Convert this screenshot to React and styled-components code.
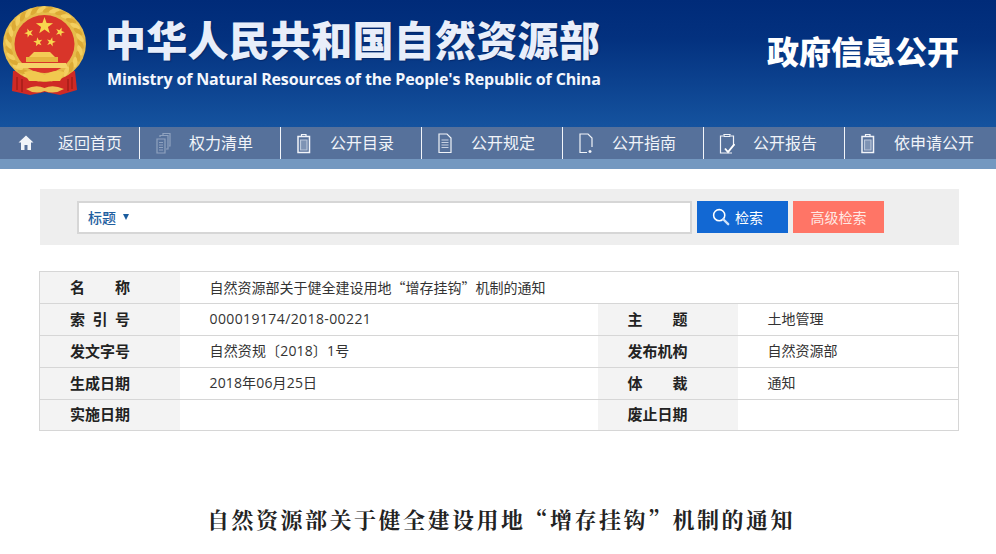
import styled, { createGlobalStyle } from 'styled-components';

const GlobalStyle = createGlobalStyle`
  html, body {
    margin: 0;
    padding: 0;
    background: #fff;
    overflow: hidden;
  }
  body {
    font-family: "Open Sans", "Noto Sans CJK SC", sans-serif;
    color: #333;
  }
`;

const Page = styled.div`
  width: 996px;
  height: 554px;
  overflow: hidden;
`;

const Header = styled.header`
  height: 127px;
  display: flex;
  align-items: flex-start;
  background: linear-gradient(180deg, #002b79 0%, #03317f 30%, #15539f 100%);
`;

const Emblem = styled.svg`
  flex: none;
  width: 90px;
  height: 96px;
  margin: 3px 0 0 0;
`;

const Brand = styled.div`
  margin: 12px 0 0 15px;
  width: 500px;
`;

const BrandName = styled.h1`
  margin: 0;
  height: 52px;
  font-family: "Noto Sans CJK SC", sans-serif;
  font-size: 41px;
  line-height: 52px;
  font-weight: 900;
  white-space: nowrap;
  letter-spacing: 0.25px;
  color: #e8eefa;
  text-shadow: 1px 1px 1px rgba(0, 20, 70, 0.45);
`;

const BrandEnglish = styled.div`
  margin: 4px 0 0 2px;
  font-family: "Open Sans", sans-serif;
  font-size: 16px;
  line-height: 22px;
  font-weight: 700;
  color: #f4f7fd;
  white-space: nowrap;
  letter-spacing: -0.15px;
`;

const Section = styled.div`
  margin: 27px 0 0 162px;
  font-family: "Noto Sans CJK SC", sans-serif;
  font-size: 32px;
  line-height: 46px;
  font-weight: 900;
  color: #fff;
  white-space: nowrap;
`;

const Nav = styled.nav`
  height: 32px;
  display: flex;
  background: #56719b;
  border-bottom: 10px solid #7498c0;
`;

const NavItem = styled.a`
  flex: none;
  box-sizing: border-box;
  width: ${(p) => (p.$first ? 140 : 141)}px;
  height: 32px;
  padding-left: 15px;
  display: flex;
  align-items: center;
  border-right: 1px solid ${(p) => (p.$last ? 'transparent' : '#f2f5fa')};
  font-family: "Noto Sans CJK SC", sans-serif;
  font-size: 16px;
  color: #f1f4f9;
  white-space: nowrap;
`;

const NavText = styled.span`
  position: relative;
  top: -1px;
`;

const NavIcon = styled.svg`
  flex: none;
  width: 16px;
  height: 22px;
  margin-left: ${(p) => (p.$first ? 3 : 0)}px;
  margin-right: ${(p) => (p.$first ? 24 : 18)}px;
  fill: none;
  stroke: #f1f4f9;
  stroke-width: 1.2;
`;

const SearchPanel = styled.div`
  box-sizing: border-box;
  width: 919px;
  height: 56px;
  margin: 20px 0 0 40px;
  padding: 12px 0 0 37px;
  display: flex;
  align-items: flex-start;
  background: #eeeeee;
`;

const SearchInput = styled.div`
  box-sizing: border-box;
  width: 615px;
  height: 33px;
  padding: 0 0 2px 9px;
  display: flex;
  align-items: center;
  gap: 6px;
  background: #fff;
  border: 2px solid #d6d6d6;
  font-family: "Noto Sans CJK SC", sans-serif;
  font-size: 14px;
  font-weight: 500;
  color: #1f5f9f;
`;

const Caret = styled.span`
  width: 0;
  height: 0;
  margin-left: 1px;
  border-left: 3px solid transparent;
  border-right: 3px solid transparent;
  border-top: 6px solid #1a5c9e;
`;

const SearchButton = styled.button`
  box-sizing: border-box;
  width: 91px;
  height: 32px;
  margin-left: 5px;
  padding: ${(p) => (p.$alt ? '0 0 1px' : '0 10px 1px 0')};
  display: flex;
  align-items: center;
  justify-content: center;
  gap: 5px;
  border: 0;
  background: ${(p) => (p.$alt ? '#ff7566' : '#1268d3')};
  color: ${(p) => (p.$alt ? '#ffe9e4' : '#fff')};
  font-family: "Noto Sans CJK SC", sans-serif;
  font-size: 14px;
`;

const InfoTable = styled.table`
  width: 919px;
  margin: 26px 0 0 39px;
  table-layout: fixed;
  border-collapse: collapse;
  border: 1px solid #d6d6d6;
`;

const Row = styled.tr`
  height: ${(p) => (p.$last ? 31 : 32)}px;
  border-top: 1px solid #d6d6d6;
`;

const Label = styled.th`
  padding: 0 0 2px 30px;
  background: #f3f3f3;
  text-align: left;
  font-family: "Noto Sans CJK SC", sans-serif;
  font-size: 15px;
  line-height: 20px;
  font-weight: 700;
  color: #222;
`;

const LabelText = styled.span`
  display: block;
  width: 60px;
  text-align: justify;
  text-align-last: justify;
`;

const Value = styled.td`
  padding: 0 0 2px 30px;
  font-family: ${(p) => (p.$cjk ? '"Noto Sans CJK SC", sans-serif' : 'inherit')};
  font-size: 14px;
  line-height: 20px;
  letter-spacing: ${(p) => p.$tracking || 0}px;
  color: #333;
  white-space: nowrap;
`;

const ArticleTitle = styled.h2`
  margin: 71px 0 0;
  padding-left: 6px;
  text-align: center;
  font-family: "Noto Serif CJK SC", "Noto Sans CJK SC", serif;
  font-size: 22px;
  line-height: 34px;
  font-weight: 700;
  letter-spacing: 2.5px;
  color: #222;
`;

function Star({ x, y, r, rotate = 0 }) {
  const pts = [];
  for (let i = 0; i < 10; i++) {
    const rad = i % 2 === 0 ? r : r * 0.4;
    const a = (Math.PI / 5) * i - Math.PI / 2;
    pts.push(`${(rad * Math.cos(a)).toFixed(2)},${(rad * Math.sin(a)).toFixed(2)}`);
  }
  return <polygon points={pts.join(' ')} fill="#f8d64e" transform={`translate(${x} ${y}) rotate(${rotate})`} />;
}

function NationalEmblem() {
  const leaves = [];
  for (let i = 0; i < 34; i++) {
    const a = (i / 34) * Math.PI * 2;
    leaves.push(
      <ellipse
        key={i}
        cx={44.5 + 36 * Math.cos(a)}
        cy={41 + 34.5 * Math.sin(a)}
        rx="5.4"
        ry="2.2"
        fill={i % 2 ? '#f3cf5f' : '#dcaa35'}
        transform={`rotate(${(a * 180) / Math.PI + 60} ${44.5 + 36 * Math.cos(a)} ${41 + 34.5 * Math.sin(a)})`}
      />
    );
  }
  return (
    <Emblem viewBox="0 0 90 96">
      <path d="M13 68 L12 88 L30 92 L45 89 L60 92 L77 87 L75 68 Z" fill="#cf2a25" />
      <path d="M17 74v13M22 76v13M68 76v12M72 74v12" stroke="#8f1712" strokeWidth="1" />
      <ellipse cx="44.5" cy="41" rx="41.5" ry="38" fill="#e6bb4a" />
      {leaves}
      <ellipse cx="44.5" cy="41" rx="30" ry="29" fill="#d9352a" />
      <Star x={44.5} y={23} r={9} />
      <Star x={29} y={30} r={4.8} rotate={-20} />
      <Star x={60} y={29} r={4.8} rotate={20} />
      <Star x={38} y={39} r={4.8} rotate={-10} />
      <Star x={51} y={39} r={4.8} rotate={15} />
      <path d="M29 54 L34 49 H50 L55 54 Z" fill="#f4cc55" />
      <rect x="26" y="54" width="32" height="5" fill="#e6b63f" />
      <path d="M18 60 H66 L68 65 H16 Z" fill="#f5d468" />
      <path d="M24 69 Q35 66 44.5 72 Q54 66 65 69 L60 78 H29 Z" fill="#f1c94f" />
      <path d="M26 86 Q36 81 44.5 85 Q53 81 64 86 Q54 92 44.5 88 Q35 92 26 86 Z" fill="#eec255" />
    </Emblem>
  );
}

const icons = {
  home: (
    <path
      d="M8 3.5 L0.5 10.5 H3 V18 H6.5 V13 H9.5 V18 H13 V10.5 H15.5 Z"
      fill="#f1f4f9"
      stroke="none"
    />
  ),
  stack: (
    <g stroke="#8fa2bf">
      <path d="M2 7 H10 V21 H2 Z" />
      <path d="M5 5 V3.5 H13 V17 H11 M8 3 V1.5 H15 V14 H14" />
      <path d="M4 10.5 H8 M4 13 H8 M4 15.5 H8 M4 18 H8" />
    </g>
  ),
  clip: (
    <g>
      <path d="M2 4.5 H13.5 V20.5 H2 Z" strokeWidth="1.5" />
      <path d="M5.5 4.5 V2.5 H10 V4.5" />
      <path d="M4.5 8 H11 V18 H4.5 Z" stroke="#b9c6da" fill="#7e93b4" />
    </g>
  ),
  doc: (
    <g>
      <path d="M2 2 H10 L14 6 V20.5 H2 Z" />
      <path d="M4.5 8 H11.5 M4.5 10.5 H11.5 M4.5 13 H11.5 M4.5 15.5 H11.5" stroke="#c7d1e2" strokeWidth="1" />
    </g>
  ),
  guide: (
    <g>
      <path d="M9 20.5 H2 V2 H10 L14 6 V15" />
      <path d="M12 18 V21 M10.5 19.5 H13.5" strokeWidth="1.4" />
    </g>
  ),
  report: (
    <g>
      <path d="M4 4 H1.5 V21 H13 M12 4 H14.5 V14" />
      <path d="M5 4.5 V2.5 H11 V4.5 Z" />
      <path d="M6 16.5 L9 20 L15.5 12" strokeWidth="1.9" stroke="#fff" />
    </g>
  ),
};

const navItems = [
  { icon: 'home', text: '返回首页' },
  { icon: 'stack', text: '权力清单' },
  { icon: 'clip', text: '公开目录' },
  { icon: 'doc', text: '公开规定' },
  { icon: 'guide', text: '公开指南' },
  { icon: 'report', text: '公开报告' },
  { icon: 'clip', text: '依申请公开' },
];

const rows = [
  { cells: ['索引号', '000019174/2018-00221', '主题', '土地管理'], tracking: 0.4 },
  { cells: ['发文字号', '自然资规〔2018〕1号', '发布机构', '自然资源部'], tracking: 0.15 },
  { cells: ['生成日期', '2018年06月25日', '体裁', '通知'], tracking: 0.15 },
  { cells: ['实施日期', '', '废止日期', ''], tracking: 0 },
];

export default function App() {
  return (
    <Page>
      <GlobalStyle />
      <Header>
        <NationalEmblem />
        <Brand>
          <BrandName>中华人民共和国自然资源部</BrandName>
          <BrandEnglish>Ministry of Natural Resources of the People's Republic of China</BrandEnglish>
        </Brand>
        <Section>政府信息公开</Section>
      </Header>

      <Nav>
        {navItems.map((item, i) => (
          <NavItem key={item.text} $first={i === 0} $last={i === navItems.length - 1}>
            <NavIcon viewBox="0 0 16 22" $first={i === 0}>
              {icons[item.icon]}
            </NavIcon>
            <NavText>{item.text}</NavText>
          </NavItem>
        ))}
      </Nav>

      <SearchPanel>
        <SearchInput>
          标题 <Caret />
        </SearchInput>
        <SearchButton>
          <svg width="18" height="18" viewBox="0 0 20 20" fill="none" stroke="#fff">
            <circle cx="8" cy="8" r="6.2" strokeWidth="1.7" />
            <path d="M12.5 12.5 L18 18" strokeWidth="2.6" strokeLinecap="round" stroke="#cfe2fa" />
          </svg>
          检索
        </SearchButton>
        <SearchButton $alt>高级检索</SearchButton>
      </SearchPanel>

      <InfoTable>
        <colgroup>
          <col width="140" />
          <col width="418" />
          <col width="140" />
          <col width="221" />
        </colgroup>
        <tbody>
          <Row>
            <Label><LabelText>名称</LabelText></Label>
            <Value colSpan={3} $cjk>自然资源部关于健全建设用地“增存挂钩”机制的通知</Value>
          </Row>
          {rows.map((r, i) => (
            <Row key={r.cells[0]} $last={i === rows.length - 1}>
              <Label><LabelText>{r.cells[0]}</LabelText></Label>
              <Value $tracking={r.tracking}>{r.cells[1]}</Value>
              <Label><LabelText>{r.cells[2]}</LabelText></Label>
              <Value>{r.cells[3]}</Value>
            </Row>
          ))}
        </tbody>
      </InfoTable>

      <ArticleTitle>自然资源部关于健全建设用地“增存挂钩”机制的通知</ArticleTitle>
    </Page>
  );
}
